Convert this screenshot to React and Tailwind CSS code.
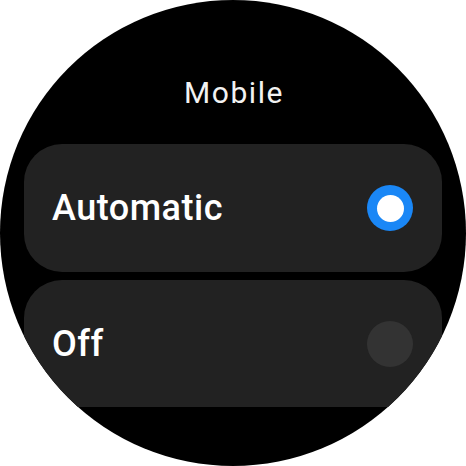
const options = [
  { label: 'Automatic', selected: true },
  { label: 'Off', selected: false },
];

function Radio({ selected }) {
  if (selected) {
    return (
      <span className="flex h-[46px] w-[46px] shrink-0 items-center justify-center rounded-full bg-[#1a87f6]">
        <span className="h-[27px] w-[27px] rounded-full bg-white" />
      </span>
    );
  }
  return <span className="h-[46px] w-[46px] shrink-0 rounded-full bg-[#333333]" />;
}

export default function App() {
  return (
    <div className="h-[466px] w-[466px] bg-white font-['Roboto',sans-serif]">
      <div className="flex h-full w-full flex-col overflow-hidden rounded-full bg-black">
        <h1 className="mt-[75px] pl-[2px] text-center text-[30px] leading-[35px] font-normal tracking-[1.6px] text-[#f2f2f2]">
          Mobile
        </h1>

        <div className="mx-6 mt-[34px] flex h-[263px] flex-col gap-2 overflow-hidden">
          {options.map((opt) => (
            <div
              key={opt.label}
              className="flex h-[128px] shrink-0 items-center justify-between rounded-[38px] bg-[#222222] pl-7 pr-[29px]"
            >
              <span className="text-[36px] leading-none font-medium tracking-[0.5px] text-white">
                {opt.label}
              </span>
              <Radio selected={opt.selected} />
            </div>
          ))}
        </div>
      </div>
    </div>
  );
}
